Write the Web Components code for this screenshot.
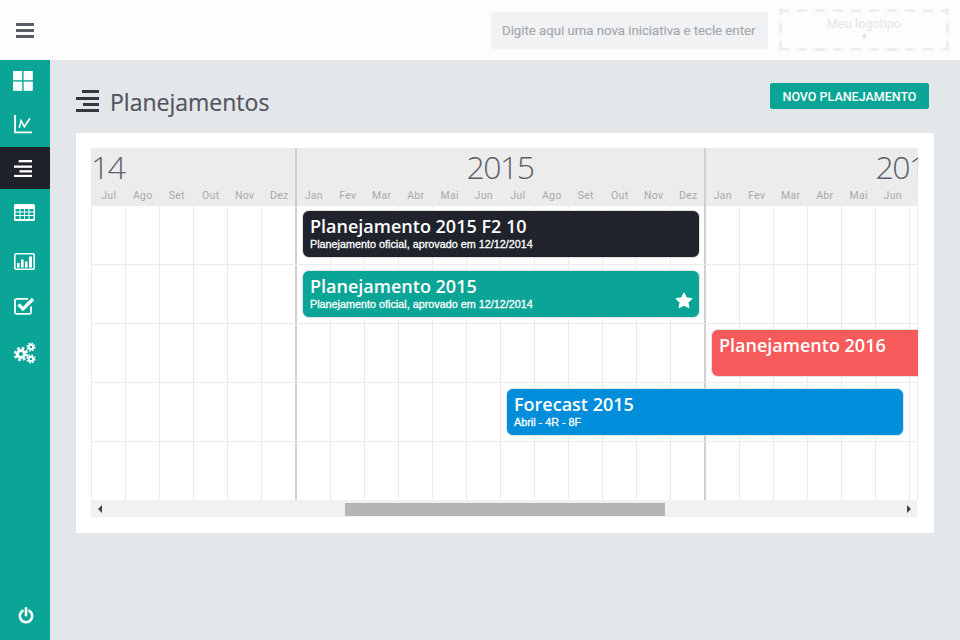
<!DOCTYPE html>
<html lang="pt-BR">
<head>
<meta charset="utf-8">
<title>Planejamentos</title>
<style>
    html, body { margin: 0; height: 100%; }
    body { font-family: "Open Sans", sans-serif; background: #e4e7ea; overflow: hidden; }
</style>
</head>
<body>
<app-shell>
    <app-sidebar slot="side"></app-sidebar>
    <app-topbar slot="top"></app-topbar>
    <page-head title="Planejamentos" action="NOVO PLANEJAMENTO"></page-head>
    <timeline-chart>
        <timeline-row>
            <timeline-bar color="#20232b" start="414" end="812" top="4" label="Planejamento 2015 F2 10">Planejamento oficial, aprovado em 12/12/2014</timeline-bar>
        </timeline-row>
        <timeline-row>
            <timeline-bar color="#0aa596" start="414" end="812" top="5" label="Planejamento 2015" starred>Planejamento oficial, aprovado em 12/12/2014</timeline-bar>
        </timeline-row>
        <timeline-row>
            <timeline-bar color="#f65a5b" start="823" end="1221" top="5" label="Planejamento 2016"></timeline-bar>
        </timeline-row>
        <timeline-row>
            <timeline-bar color="#008dd9" start="618" end="1016" top="5" label="Forecast 2015">Abril - 4R - 8F</timeline-bar>
        </timeline-row>
        <timeline-row last></timeline-row>
    </timeline-chart>
</app-shell>

<script>
// Page frame: sidebar on the left, topbar and content on the right
class AppShell extends HTMLElement {
    constructor() {
        super();
        this.attachShadow({ mode: 'open' });
    }

    connectedCallback() {
        this.shadowRoot.innerHTML = `
            <style>
                :host { display: flex; width: 960px; height: 640px; }
                .right { flex: 1; display: flex; flex-direction: column; min-width: 0; }
                main { flex: 1; padding: 0 26px; }
            </style>
            <slot name="side"></slot>
            <div class="right">
                <slot name="top"></slot>
                <main><slot></slot></main>
            </div>
        `;
    }
}

const LINES_ICON = `<svg viewBox="0 0 23 22" fill="currentColor" style="display:block">
    <rect x="6" y="0" width="17" height="3"/><rect x="0" y="7" width="23" height="3"/>
    <rect x="7" y="13" width="16" height="3"/><rect x="0" y="19" width="23" height="3"/>
</svg>`;

// shift moves an icon left of the centre of the 50px column
const NAV_ITEMS = [
    { h: 42, shift: 4, svg: `<svg width="20" height="20" viewBox="0 0 20 20" fill="#fff"><rect width="9.2" height="9.2"/><rect x="10.6" width="9.2" height="9.2"/><rect y="10.6" width="9.2" height="9.2"/><rect x="10.6" y="10.6" width="9.2" height="9.2"/></svg>` },
    { h: 45, shift: 4, svg: `<svg width="19" height="19" viewBox="0 0 19 19" fill="none" stroke="#fff"><path d="M1.1 0v17.4H18" stroke-width="1.9"/><path d="M5.3 13 7 5.7l3.3 6L16 3.3" stroke-width="1.6"/></svg>` },
    { h: 42, shift: 4, active: true, svg: `<span style="display:block;width:18px;height:17px">${LINES_ICON}</span>` },
    { h: 47, shift: 1, svg: `<svg width="21" height="17" viewBox="0 0 21 17"><rect width="21" height="17" rx="1.5" fill="#fff"/><g fill="#0aa596"><rect x="1.5" y="5" width="4" height="2.5"/><rect x="6.5" y="5" width="3.5" height="2.5"/><rect x="11" y="5" width="3.5" height="2.5"/><rect x="15.5" y="5" width="4" height="2.5"/><rect x="1.5" y="8.5" width="4" height="2.5"/><rect x="6.5" y="8.5" width="3.5" height="2.5"/><rect x="11" y="8.5" width="3.5" height="2.5"/><rect x="15.5" y="8.5" width="4" height="2.5"/><rect x="1.5" y="12" width="4" height="3"/><rect x="6.5" y="12" width="3.5" height="3"/><rect x="11" y="12" width="3.5" height="3"/><rect x="15.5" y="12" width="4" height="3"/></g></svg>` },
    { h: 50, shift: 1, svg: `<svg width="21" height="17" viewBox="0 0 21 17"><rect x=".8" y=".8" width="19.4" height="15.4" rx="1.5" fill="none" stroke="#fff" stroke-width="1.6"/><g fill="#fff"><rect x="3" y="10" width="2.6" height="4.5"/><rect x="7" y="6.5" width="2.6" height="8"/><rect x="11" y="8.5" width="2.6" height="6"/><rect x="15" y="3.5" width="3" height="11"/></g></svg>` },
    { h: 40, shift: 1, svg: `<svg width="21" height="18" viewBox="0 0 21 18" fill="none" stroke="#fff"><path d="M17 9.5v5.7a1.6 1.6 0 0 1-1.6 1.6H2.6A1.6 1.6 0 0 1 1 15.2V3.4a1.6 1.6 0 0 1 1.6-1.6H14" stroke-width="1.8"/><path d="M4.5 7.5 9 12 19 2" stroke-width="3.2"/></svg>` },
    { h: 54, shift: 2, svg: `<svg width="23" height="22" viewBox="0 0 23 22" fill="none" stroke="#fff"><circle cx="8" cy="12" r="3.6" stroke-width="3"/><circle cx="8" cy="12" r="6" stroke-width="2.4" stroke-dasharray="2.6 2.11"/><circle cx="18" cy="5" r="2.2" stroke-width="2"/><circle cx="18" cy="5" r="3.8" stroke-width="1.6" stroke-dasharray="1.6 1.38"/><circle cx="18" cy="17" r="2.2" stroke-width="2"/><circle cx="18" cy="17" r="3.8" stroke-width="1.6" stroke-dasharray="1.6 1.38"/></svg>` }
];

// Left column with the menu button, the nav icons and the power button
class AppSidebar extends HTMLElement {
    constructor() {
        super();
        this.attachShadow({ mode: 'open' });
    }

    connectedCallback() {
        const items = NAV_ITEMS.map(item => `
            <a href="#" class="item ${item.active ? 'active' : ''}" style="height:${item.h}px;padding-right:${item.shift}px">${item.svg}</a>
        `).join('');
        this.shadowRoot.innerHTML = `
            <style>
                :host { display: flex; flex-direction: column; width: 50px; flex: none; height: 640px; }
                .menu { height: 60px; background: #fdfdfd; display: flex; align-items: center; justify-content: center; }
                .burger { width: 18px; height: 15px; display: flex; flex-direction: column; justify-content: space-between; }
                .burger i { display: block; height: 3px; background: #5a5d66; }
                nav { flex: 1; background: #0aa596; display: flex; flex-direction: column; }
                .item { display: flex; align-items: center; justify-content: center; text-decoration: none; box-sizing: border-box; }
                .item.active { background: #1f2229; color: #fff; }
                .power { margin-top: auto; height: 50px; display: flex; justify-content: center; align-items: center; padding-left: 2px; box-sizing: border-box; }
            </style>
            <div class="menu"><div class="burger"><i></i><i></i><i></i></div></div>
            <nav>
                ${items}
                <div class="power">
                    <svg width="16" height="17" viewBox="0 0 16 17" fill="none" stroke="#fff" stroke-width="2.6" stroke-linecap="round">
                        <path d="M4.6 3.8a6.2 6.2 0 1 0 6.8 0"/><path d="M8 1.3v7"/>
                    </svg>
                </div>
            </nav>
        `;
    }
}

// Top bar with the quick entry field and the logo placeholder
class AppTopbar extends HTMLElement {
    constructor() {
        super();
        this.attachShadow({ mode: 'open' });
    }

    connectedCallback() {
        this.shadowRoot.innerHTML = `
            <style>
                :host { display: flex; height: 60px; flex: none; background: #fdfdfd; justify-content: flex-end; align-items: center; padding-right: 11px; gap: 11px; }
                .entry {
                    width: 277px; height: 37px; box-sizing: border-box; padding-left: 11px;
                    background: #f1f2f4; color: #a4a7ac; display: flex; align-items: center;
                    font: 400 13.2px Roboto, sans-serif; white-space: nowrap; -webkit-text-stroke: .15px #a4a7ac;
                }
                .logo {
                    width: 170px; height: 42px; box-sizing: border-box;
                    color: #e6e6e6; font: 400 12.7px/13px Roboto, sans-serif; text-align: center;
                    padding-top: 8px;
                    background:
                        repeating-linear-gradient(90deg, #eee 0 10px, transparent 10px 18px) left top / 100% 3px no-repeat,
                        repeating-linear-gradient(90deg, #eee 0 10px, transparent 10px 18px) left bottom / 100% 3px no-repeat,
                        repeating-linear-gradient(0deg, #eee 0 10px, transparent 10px 18px) left top / 3px 100% no-repeat,
                        repeating-linear-gradient(0deg, #eee 0 10px, transparent 10px 18px) right top / 3px 100% no-repeat;
                }
                .logo small { display: block; font-size: 10px; line-height: 14px; color: #d5d5d5; }
            </style>
            <div class="entry">Digite aqui uma nova iniciativa e tecle enter</div>
            <div class="logo">Meu logotipo<small>+</small></div>
        `;
    }
}

// Title of the page and its main action
class PageHead extends HTMLElement {
    constructor() {
        super();
        this.attachShadow({ mode: 'open' });
    }

    connectedCallback() {
        this.shadowRoot.innerHTML = `
            <style>
                :host { display: flex; height: 73px; justify-content: space-between; align-items: flex-start; }
                .title { display: flex; align-items: center; gap: 11px; margin-top: 29px; color: #333740; }
                .title span { display: block; width: 23px; height: 22px; margin-top: -2px; }
                h1 { margin: 0; font: 400 23px/26px "Open Sans", sans-serif; color: #50545e; -webkit-text-stroke: .2px #50545e; }
                button {
                    margin: 23px 5px 0 0; width: 159px; height: 26px; padding: 0; border: none; border-radius: 2px;
                    background: #0aa596; color: #fff; font: 500 12.5px Roboto, sans-serif;
                }
            </style>
            <div class="title"><span>${LINES_ICON}</span><h1>${this.getAttribute('title')}</h1></div>
            <button>${this.getAttribute('action')}</button>
        `;
    }
}

const MONTHS = ['Jan', 'Fev', 'Mar', 'Abr', 'Mai', 'Jun', 'Jul', 'Ago', 'Set', 'Out', 'Nov', 'Dez'];

// One year column of the chart: label, months and grid lines
// from/to limit the month labels to the part of the year in view
class TimelineYear extends HTMLElement {
    constructor() {
        super();
        this.attachShadow({ mode: 'open' });
    }

    connectedCallback() {
        const from = Number(this.getAttribute('from') || 0);
        const to = Number(this.getAttribute('to') || 12);
        const labels = MONTHS.map((m, i) => `<span>${i >= from && i < to ? m : ''}</span>`).join('');
        const cells = MONTHS.map(() => '<i></i>').join('');
        this.shadowRoot.innerHTML = `
            <style>
                :host { display: block; width: 409px; flex: none; }
                .head { height: 58px; background: #ececec; position: relative; }
                .year { height: 38px; text-align: center; font: 300 32px/38px "Open Sans", sans-serif; letter-spacing: -1.5px; color: #5c616b; padding-right: 3px; }
                .months, .cells { display: grid; grid-template-columns: repeat(11, 34px) 35px; }
                .months span { text-align: center; font: 400 10.5px/20px Roboto, sans-serif; letter-spacing: .3px; color: #a9a9a9; padding-right: .5px; }
                .head::after { content: ""; position: absolute; top: 0; bottom: 0; right: 0; width: 2px; background: #cfcfcf; }
                .cells { height: 294px; background: #fff; }
                .cells i { display: block; border-right: 1px solid #ebebeb; }
                .cells i:last-child { border-right: 2px solid #cfcfcf; }
            </style>
            <div class="head">
                <div class="year">${this.getAttribute('year')}</div>
                <div class="months">${labels}</div>
            </div>
            <div class="cells">${cells}</div>
        `;
    }
}

class TimelineChart extends HTMLElement {
    constructor() {
        super();
        this.attachShadow({ mode: 'open' });
    }

    connectedCallback() {
        this.shadowRoot.innerHTML = `
            <style>
                :host { display: block; height: 400px; box-sizing: border-box; background: #fff; padding: 11px 16px 16px 15px; }
                .view { height: 352px; padding-top: 4px; overflow: hidden; position: relative; }
                .track { display: flex; margin-left: -203px; position: relative; width: 1227px; }
                .rows { position: absolute; left: 0; right: 0; top: 58px; z-index: 1; }
                .view::after { content: ""; position: absolute; right: 0; top: 62px; bottom: 0; width: 1px; background: #ebebeb; }
                .bar { height: 17px; width: 826px; background: #f1f1f1; display: flex; align-items: flex-start; }
                .arrow { width: 17px; height: 17px; flex: none; display: flex; align-items: center; justify-content: center; }
                .arrow svg { display: block; }
                .rail { flex: 1; padding-top: 3px; }
                .thumb { width: 320px; height: 13px; margin-left: 237px; background: #b5b5b5; }
            </style>
            <div class="view">
                <div class="track">
                    <timeline-year year="2014" from="6"></timeline-year>
                    <timeline-year year="2015"></timeline-year>
                    <timeline-year year="2016" to="6"></timeline-year>
                    <div class="rows"><slot></slot></div>
                </div>
            </div>
            <div class="bar">
                <div class="arrow"><svg width="4" height="8"><path d="M4 0v8L0 4z" fill="#444"/></svg></div>
                <div class="rail"><div class="thumb"></div></div>
                <div class="arrow"><svg width="4" height="8"><path d="M0 0v8l4-4z" fill="#444"/></svg></div>
            </div>
        `;
    }
}

class TimelineRow extends HTMLElement {
    constructor() {
        super();
        this.attachShadow({ mode: 'open' });
    }

    connectedCallback() {
        const last = this.hasAttribute('last');
        this.shadowRoot.innerHTML = `
            <style>
                :host { display: block; position: relative; height: ${last ? 58 : 59}px; box-sizing: border-box; ${last ? '' : 'border-bottom: 1px solid #ebebeb;'} }
            </style>
            <slot></slot>
        `;
    }
}

// A plan on the chart, placed by its start and end on the track
class TimelineBar extends HTMLElement {
    constructor() {
        super();
        this.attachShadow({ mode: 'open' });
    }

    connectedCallback() {
        const start = Number(this.getAttribute('start'));
        const end = Number(this.getAttribute('end'));
        const star = this.hasAttribute('starred') ? `
            <svg class="star" width="18" height="17" viewBox="0 0 18 17"><path d="M9 1.2 11.3 6l5.3.7-3.9 3.6 1 5.2L9 13l-4.7 2.5 1-5.2-3.9-3.6L6.7 6z" fill="#fff" stroke="#fff" stroke-width="1.4" stroke-linejoin="round"/></svg>
        ` : '';
        this.shadowRoot.innerHTML = `
            <style>
                :host {
                    position: absolute; left: ${start}px; width: ${end - start}px; top: ${this.getAttribute('top')}px;
                    height: 48px; box-sizing: border-box; padding: 4px 7px; border-radius: 7px;
                    background: ${this.getAttribute('color')}; color: #fff; border: 1px solid #dfe3e6;
                }
                .label { font: 600 18px/23px "Open Sans", sans-serif; white-space: nowrap; }
                .sub { font: 400 10.8px/13px "Liberation Sans", sans-serif; -webkit-text-stroke: .3px #fff; white-space: nowrap; }
                .star { position: absolute; right: 6px; bottom: 8px; }
            </style>
            <div class="label">${this.getAttribute('label')}</div>
            <div class="sub"><slot></slot></div>
            ${star}
        `;
    }
}

customElements.define('app-shell', AppShell);
customElements.define('app-sidebar', AppSidebar);
customElements.define('app-topbar', AppTopbar);
customElements.define('page-head', PageHead);
customElements.define('timeline-year', TimelineYear);
customElements.define('timeline-chart', TimelineChart);
customElements.define('timeline-row', TimelineRow);
customElements.define('timeline-bar', TimelineBar);
</script>
</body>
</html>
